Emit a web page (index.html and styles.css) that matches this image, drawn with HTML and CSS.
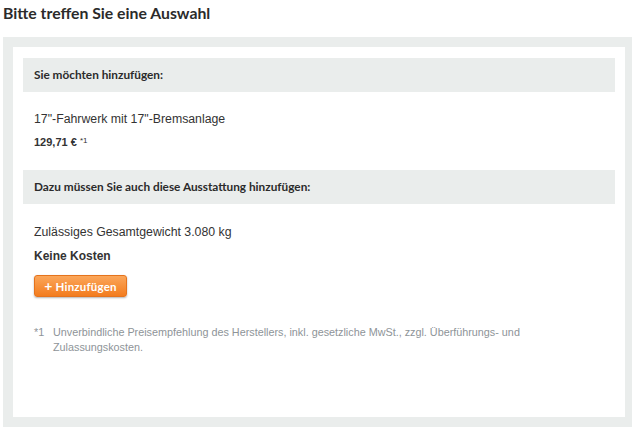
FILE: index.html
```html
<!DOCTYPE html>
<html lang="de">
<head>
<meta charset="utf-8">
<title>Auswahl</title>
<link rel="stylesheet" href="styles.css">
</head>
<body>
<h1 class="title">Bitte treffen Sie eine Auswahl</h1>
<div class="frame">
  <div class="panel">
    <div class="bar">Sie möchten hinzufügen:</div>
    <div class="section">
      <p class="item">17"-Fahrwerk mit 17"-Bremsanlage</p>
      <p class="price">129,71 € <sup class="note">*1</sup></p>
    </div>
    <div class="bar">Dazu müssen Sie auch diese Ausstattung hinzufügen:</div>
    <div class="section">
      <p class="item item2">Zulässiges Gesamtgewicht 3.080 kg</p>
      <p class="cost">Keine Kosten</p>
      <button class="add" type="button"><span class="plus">+</span> Hinzufügen</button>
      <div class="footnote">
        <span class="fn-mark">*1</span>
        <span class="fn-text">Unverbindliche Preisempfehlung des Herstellers, inkl. gesetzliche MwSt., zzgl. Überführungs- und Zulassungskosten.</span>
      </div>
    </div>
  </div>
</div>
</body>
</html>
```
FILE: styles.css
```css
* { box-sizing: border-box; }
body {
  margin: 0;
  background: #fff;
  font-family: "Liberation Sans", Arial, sans-serif;
  color: #333;
}
.title {
  margin: 0;
  padding: 4px 0 0 3px;
  height: 37px;
  font-family: Lato, "Open Sans", sans-serif;
  font-weight: 700;
  font-size: 15.8px;
  line-height: 18px;
  color: #2b2b2b;
}
.frame {
  margin-left: 3px;
  width: 629px;
  height: 390px;
  background: #eaedec;
  padding: 10px 7px 10px 10px;
}
.panel {
  background: #fff;
  height: 100%;
  padding: 11px 10px 0 10px;
}
.bar {
  height: 34px;
  background: #eaedec;
  padding-left: 11px;
  font-family: Lato, "Open Sans", sans-serif;
  font-weight: 700;
  font-size: 11.8px;
  line-height: 34px;
  color: #2b2b2b;
}
.section {
  padding: 0 11px;
}
.item {
  margin: 19px 0 0;
  font-size: 12.3px;
  line-height: 16px;
  color: #333;
}
.price {
  margin: 8px 0 21px;
  font-size: 11px;
  font-weight: 700;
  line-height: 14px;
  color: #333;
}
.note {
  font-size: 8px;
  font-weight: 400;
  vertical-align: 3px;
  line-height: 0;
}
.item2 { margin-top: 20px; }
.cost {
  margin: 8px 0 11px;
  font-size: 12px;
  font-weight: 700;
  line-height: 16px;
  color: #333;
}
.add {
  display: block;
  width: 93px;
  height: 22px;
  padding: 0;
  border: 1px solid #e5731d;
  border-radius: 3px;
  background: linear-gradient(#fba65a, #f37c1e);
  box-shadow: 0 1px 2px rgba(0,0,0,0.3);
  color: #fff;
  font-family: Lato, "Open Sans", sans-serif;
  font-weight: 700;
  font-size: 11.5px;
  letter-spacing: 0.2px;
  line-height: 20px;
  text-align: center;
}
.plus { font-size: 14px; }
.footnote {
  margin-top: 28px;
  display: flex;
  font-size: 10.8px;
  line-height: 15px;
  color: #8e9498;
}
.fn-mark { width: 19px; flex: none; }
.fn-text { width: 480px; }
```
